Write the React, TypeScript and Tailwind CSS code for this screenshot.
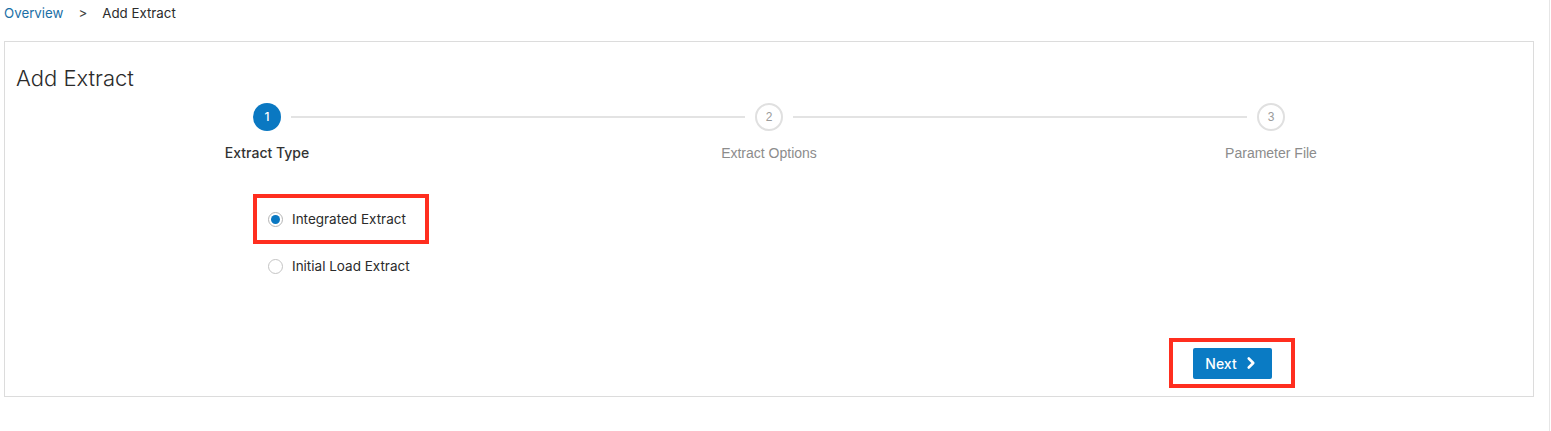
import { ChevronRight } from "lucide-react";

type Step = { n: number; label: string; active?: boolean };

const steps: Step[] = [
  { n: 1, label: "Extract Type", active: true },
  { n: 2, label: "Extract Options" },
  { n: 3, label: "Parameter File" },
];

function StepItem({ step, first, last }: { step: Step; first: boolean; last: boolean }) {
  return (
    <div className="flex flex-col items-center">
      <div className="flex w-full items-center gap-[10px]">
        <div className={`h-[2px] flex-1 ${first ? "bg-transparent" : "bg-[#e3e3e3]"}`} />
        {step.active ? (
          <div className="flex h-[28px] w-[28px] items-center justify-center rounded-full bg-[#0a78c2] text-[12px] font-medium text-white">
            {step.n}
          </div>
        ) : (
          <div className="flex h-[28px] w-[28px] items-center justify-center rounded-full border-2 border-[#e0e0e0] bg-white text-[12px] text-[#9a9a9a] [font-family:'Liberation_Sans',Arial,sans-serif]">
            {step.n}
          </div>
        )}
        <div className={`h-[2px] flex-1 ${last ? "bg-transparent" : "bg-[#e3e3e3]"}`} />
      </div>
      {step.active ? (
        <div className="mt-[12px] text-[14px] font-medium leading-[20px] text-[#333]">{step.label}</div>
      ) : (
        <div className="mt-[12px] text-[14px] leading-[20px] text-[#8c8c8c] [font-family:'Liberation_Sans',Arial,sans-serif]">
          {step.label}
        </div>
      )}
    </div>
  );
}

function Radio({ checked, label }: { checked?: boolean; label: string }) {
  return (
    <label className="flex items-center gap-[9px]">
      <span
        className={`flex h-[15px] w-[15px] items-center justify-center rounded-full border bg-white ${
          checked ? "border-[#b5b5b5]" : "border-[#c4c4c4]"
        }`}
      >
        {checked && <span className="h-[9px] w-[9px] rounded-full bg-[#0a78c2]" />}
      </span>
      <span className="text-[13.5px] leading-[20px] text-[#2b2b2b]">{label}</span>
    </label>
  );
}

export default function App() {
  return (
    <div className="h-[431px] w-[1550px] border-r border-[#e6e6e6] bg-white font-['Inter',sans-serif] text-[#333]">
      {/* Breadcrumb */}
      <div className="flex items-center pl-[4px] pt-[3px] text-[13.3px] leading-[20px]">
        <span className="text-[#1b6fa6]">Overview</span>
        <span className="ml-[15px] text-[#444]">&gt;</span>
        <span className="ml-[15px] text-[#2b2b2b]">Add Extract</span>
      </div>

      {/* Panel */}
      <div className="ml-[4px] mt-[18px] flex h-[356px] w-[1530px] flex-col border border-[#dcdcdc] px-[11px]">
        <h1 className="mt-[22px] text-[22px] font-light leading-[28px] text-[#2b2b2b]">Add Extract</h1>

        <div className="mt-[11px] grid grid-cols-3">
          {steps.map((s, i) => (
            <StepItem key={s.n} step={s} first={i === 0} last={i === steps.length - 1} />
          ))}
        </div>

        <div className="ml-[237px] mt-[31px] flex flex-col items-start">
          <div className="flex h-[50px] w-[176px] items-center border-[4px] border-[#ff2e1f] pl-[11px]">
            <Radio checked label="Integrated Extract" />
          </div>
          <div className="mt-[12px] flex items-center pl-[15px]">
            <Radio label="Initial Load Extract" />
          </div>
        </div>

        <div className="mt-auto mb-[8px] flex justify-end pr-[227px]">
          <div className="flex h-[50px] w-[126px] items-center justify-center border-[4px] border-[#ff2e1f] pl-[1px]">
            <button className="flex h-[31px] w-[79px] items-center justify-center gap-[5px] rounded-[2px] bg-[#0a7bc4] text-[14px] font-medium text-white">
              Next
              <ChevronRight className="h-[18px] w-[18px]" strokeWidth={3.5} />
            </button>
          </div>
        </div>
      </div>
    </div>
  );
}
